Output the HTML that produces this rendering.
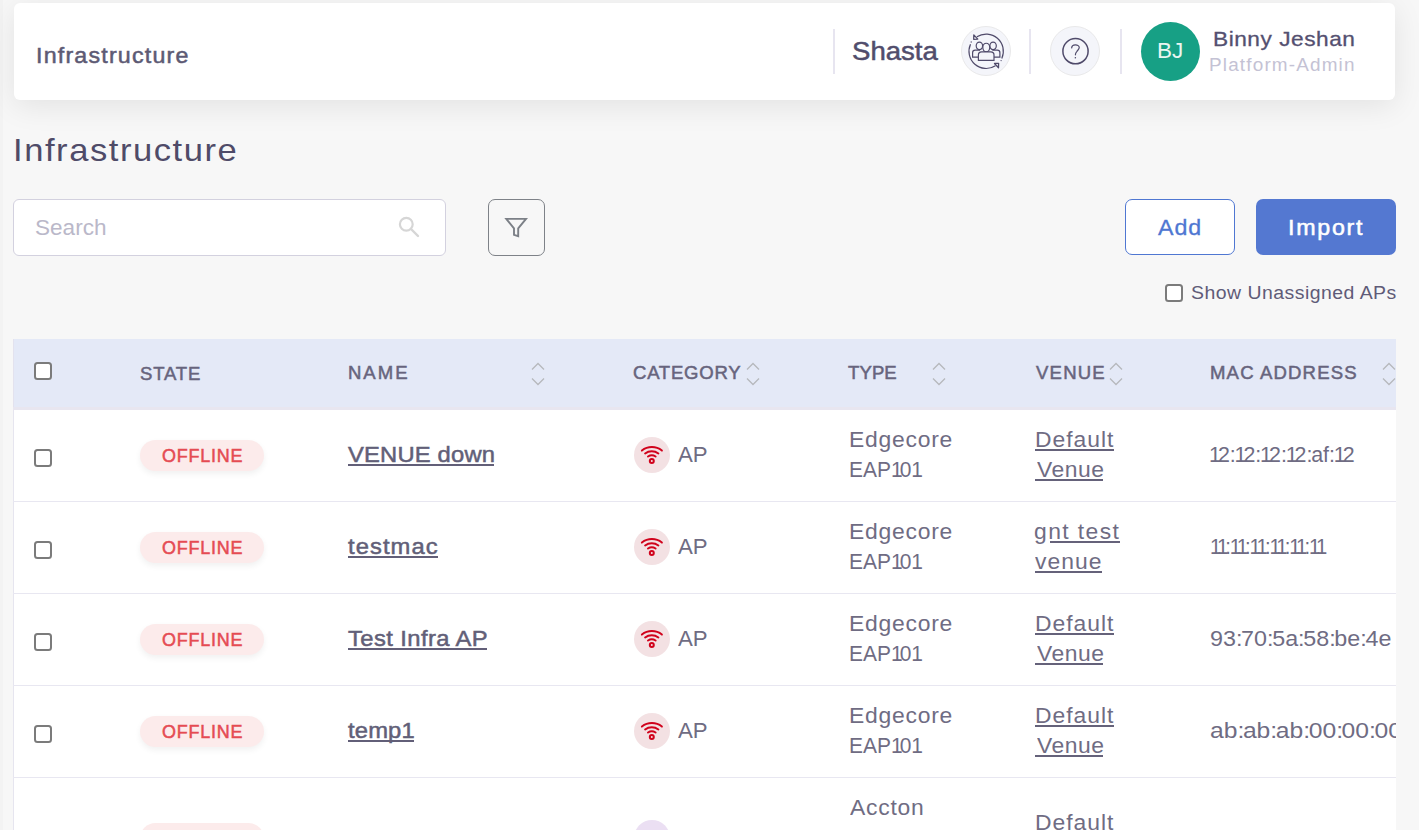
<!DOCTYPE html>
<html><head><meta charset="utf-8"><title>Infrastructure</title>
<style>
html,body{margin:0;padding:0;}
body{width:1419px;height:830px;overflow:hidden;position:relative;background:#f7f7f7;font-family:'Liberation Sans', sans-serif;}
.abs{position:absolute;box-sizing:border-box;}
 body{background:#f7f7f7}</style></head>
<body>
<div class="abs" style="left:0;top:0;width:3px;height:830px;background:#f3f3f3"></div><div class="abs" style="left:14px;top:3px;width:1381px;height:97px;background:#fff;border-radius:6px;box-shadow:0 6px 30px rgba(0,0,0,0.085)"></div><div class="abs" style="left:833px;top:29px;width:2px;height:45px;background:#e7e5f0"></div><div class="abs" style="left:1029px;top:29px;width:2px;height:45px;background:#e7e5f0"></div><div class="abs" style="left:1120px;top:29px;width:2px;height:45px;background:#e7e5f0"></div><div class="abs" style="left:961.3px;top:26.3px;width:50px;height:50px;border-radius:50%;background:#f4f5fa;border:1.5px solid #e9e9ea"></div><div class="abs" style="left:1050.1px;top:26.3px;width:50px;height:50px;border-radius:50%;background:#f4f5fa;border:1.5px solid #e9e9ea"></div><svg class="abs" style="left:961.3px;top:26.3px" width="50" height="50" viewBox="0 0 50 50" fill="none" stroke="#4f4a6a" stroke-width="1.2">
<path d="M15.86 10.83 A17.2 17.2 0 0 1 40.79 32.46"/>
<path d="M34.44 39.77 A17.2 17.2 0 0 1 9.51 18.14"/>
<path d="M12.8 8.9 L12.7 13.3 L16.8 13.14 Z" stroke-linejoin="round" stroke-width="1.3"/>
<path d="M37.5 41.7 L37.6 37.3 L33.5 37.46 Z" stroke-linejoin="round" stroke-width="1.3"/>
<circle cx="10.2" cy="16.0" r="0.65" fill="#4f4a6a" stroke="none"/>
<circle cx="40.1" cy="34.6" r="0.65" fill="#4f4a6a" stroke="none"/>
<ellipse cx="18.4" cy="19.85" rx="3.2" ry="3.75"/>
<ellipse cx="32.1" cy="19.85" rx="3.2" ry="3.75"/>
<path d="M17.4 31.1 H11.6 V26.7 Q11.6 24.1 14.2 24.1 H19"/>
<path d="M32.9 31.1 H38.9 V26.7 Q38.9 24.1 36.3 24.1 H31.4"/>
<ellipse cx="25.27" cy="21.5" rx="3.45" ry="4.25" fill="#f4f5fa"/>
<path d="M17.4 34.3 V29.0 Q17.4 25.9 20.6 25.9 H29.8 Q33.0 25.9 33.0 29.0 V34.3 Z" fill="#f4f5fa"/></svg><svg class="abs" style="left:1050.1px;top:26.3px" width="50" height="50" viewBox="0 0 50 50" fill="none" stroke="#4f4a6a" stroke-width="1.6">
<circle cx="25.5" cy="25.2" r="12.6" stroke-width="1.5"/>
<path d="M21.66 21.9 C21.8 19.9 23.4 18.85 25.4 18.85 C27.6 18.85 29.25 20.2 29.25 21.6 C29.25 23.2 27.9 24.1 26.9 25.3 C25.9 26.4 25.4 27.3 25.4 28.8" stroke-width="1.2" stroke-linecap="round"/>
<path d="M25.4 31.1 V32.4" stroke-width="1.3"/></svg><div class="abs" style="left:1141px;top:21.8px;width:59px;height:59px;border-radius:50%;background:#17a085"></div><div class="abs" style="left:13px;top:199px;width:433px;height:57px;background:#fff;border:1px solid #d3d1df;border-radius:6px"></div><svg class="abs" style="left:395px;top:212px" width="28" height="28" viewBox="0 0 28 28" fill="none" stroke="#d6d6d6" stroke-width="2.2">
<circle cx="11.3" cy="12.2" r="6.4"/><path d="M16 17 L23 24" stroke-linecap="round" stroke-width="2.4"/></svg><div class="abs" style="left:488px;top:199px;width:57px;height:57px;border:1.5px solid #7e8288;border-radius:7px"></div><svg class="abs" style="left:488px;top:199px" width="57" height="57" viewBox="0 0 57 57" fill="none" stroke="#7c8087" stroke-width="1.9" stroke-linejoin="miter">
<path d="M18.3 19.9 H38.0 L30.2 29.4 V37.2 L26.0 35.8 V29.4 Z"/></svg><div class="abs" style="left:1125px;top:199px;width:110px;height:56px;background:#fff;border:1px solid #4f77d2;border-radius:7px"></div><div class="abs" style="left:1256px;top:199px;width:140px;height:56px;background:#5478d1;border-radius:7px"></div><div class="abs" style="left:1165px;top:284px;width:18px;height:18px;background:#fff;border:2px solid #7b7b7b;border-radius:3.5px"></div><div class="abs" style="left:13px;top:339px;width:1383px;height:491px;background:#fff;border-left:1px solid #e6e5ef"></div><div class="abs" style="left:13px;top:339px;width:1383px;height:68px;background:#e4e9f7;border-left:1px solid #e3e2ee"></div><div class="abs" style="left:13px;top:407px;width:1383px;height:3px;background:#e8e6f0"></div><div class="abs" style="left:13px;top:501px;width:1383px;height:1px;background:#e8e7f1"></div><div class="abs" style="left:13px;top:593px;width:1383px;height:1px;background:#e8e7f1"></div><div class="abs" style="left:13px;top:685px;width:1383px;height:1px;background:#e8e7f1"></div><div class="abs" style="left:13px;top:777px;width:1383px;height:1px;background:#e8e7f1"></div><div class="abs" style="left:34px;top:362px;width:18px;height:18px;background:#fff;border:2px solid #7b7b7b;border-radius:3.5px"></div><div class="abs" style="left:34px;top:449px;width:18px;height:18px;background:#fff;border:2px solid #7b7b7b;border-radius:3.5px"></div><div class="abs" style="left:34px;top:541px;width:18px;height:18px;background:#fff;border:2px solid #7b7b7b;border-radius:3.5px"></div><div class="abs" style="left:34px;top:633px;width:18px;height:18px;background:#fff;border:2px solid #7b7b7b;border-radius:3.5px"></div><div class="abs" style="left:34px;top:725px;width:18px;height:18px;background:#fff;border:2px solid #7b7b7b;border-radius:3.5px"></div><svg class="abs" style="left:531.0px;top:361.5px" width="14" height="24" viewBox="0 0 14 24" fill="none" stroke="#b6b8bd" stroke-width="1.3">
<path d="M1 7.5 L7 1.5 L13 7.5"/><path d="M1 16.5 L7 22.5 L13 16.5"/></svg><svg class="abs" style="left:745.8px;top:361.5px" width="14" height="24" viewBox="0 0 14 24" fill="none" stroke="#b6b8bd" stroke-width="1.3">
<path d="M1 7.5 L7 1.5 L13 7.5"/><path d="M1 16.5 L7 22.5 L13 16.5"/></svg><svg class="abs" style="left:932.0px;top:361.5px" width="14" height="24" viewBox="0 0 14 24" fill="none" stroke="#b6b8bd" stroke-width="1.3">
<path d="M1 7.5 L7 1.5 L13 7.5"/><path d="M1 16.5 L7 22.5 L13 16.5"/></svg><svg class="abs" style="left:1108.5px;top:361.5px" width="14" height="24" viewBox="0 0 14 24" fill="none" stroke="#b6b8bd" stroke-width="1.3">
<path d="M1 7.5 L7 1.5 L13 7.5"/><path d="M1 16.5 L7 22.5 L13 16.5"/></svg><svg class="abs" style="left:1382.3px;top:361.5px" width="14" height="24" viewBox="0 0 14 24" fill="none" stroke="#b6b8bd" stroke-width="1.3">
<path d="M1 7.5 L7 1.5 L13 7.5"/><path d="M1 16.5 L7 22.5 L13 16.5"/></svg><div class="abs" style="left:140px;top:440px;width:124px;height:31px;border-radius:16px;background:#fcebeb;box-shadow:0 3px 6px rgba(0,0,0,0.06)"></div><div class="abs" style="left:348.1px;top:464.2px;width:145.8px;height:2px;background:#625f78"></div><div class="abs" style="left:1035.1px;top:449.2px;width:78.7px;height:1.8px;background:#65627a"></div><div class="abs" style="left:1035.1px;top:479.0px;width:68.3px;height:1.8px;background:#65627a"></div><div class="abs" style="left:634.2px;top:437px;width:36px;height:36px;border-radius:50%;background:#f3e1e3"></div><svg class="abs" style="left:634.2px;top:437px" width="36" height="36" viewBox="0 0 36 36" fill="none" stroke="#d0021b" stroke-width="1.95" stroke-linecap="round">
<path d="M7.9 13.6 A16 16 0 0 1 27.9 13.6"/>
<path d="M11.1 16.5 A10.95 10.95 0 0 1 24.4 16.5"/>
<path d="M14.0 19.5 A7.1 7.1 0 0 1 21.6 19.5"/>
<circle cx="17.8" cy="24.1" r="2" stroke-width="2"/></svg><div class="abs" style="left:140px;top:532px;width:124px;height:31px;border-radius:16px;background:#fcebeb;box-shadow:0 3px 6px rgba(0,0,0,0.06)"></div><div class="abs" style="left:348.1px;top:556.2px;width:89.5px;height:2px;background:#625f78"></div><div class="abs" style="left:1050.0px;top:541.2px;width:69.7px;height:1.8px;background:#65627a"></div><div class="abs" style="left:1035.1px;top:571.0px;width:66.5px;height:1.8px;background:#65627a"></div><div class="abs" style="left:634.2px;top:529px;width:36px;height:36px;border-radius:50%;background:#f3e1e3"></div><svg class="abs" style="left:634.2px;top:529px" width="36" height="36" viewBox="0 0 36 36" fill="none" stroke="#d0021b" stroke-width="1.95" stroke-linecap="round">
<path d="M7.9 13.6 A16 16 0 0 1 27.9 13.6"/>
<path d="M11.1 16.5 A10.95 10.95 0 0 1 24.4 16.5"/>
<path d="M14.0 19.5 A7.1 7.1 0 0 1 21.6 19.5"/>
<circle cx="17.8" cy="24.1" r="2" stroke-width="2"/></svg><div class="abs" style="left:140px;top:624px;width:124px;height:31px;border-radius:16px;background:#fcebeb;box-shadow:0 3px 6px rgba(0,0,0,0.06)"></div><div class="abs" style="left:348.1px;top:648.2px;width:138.6px;height:2px;background:#625f78"></div><div class="abs" style="left:1035.1px;top:633.2px;width:78.7px;height:1.8px;background:#65627a"></div><div class="abs" style="left:1035.1px;top:663.0px;width:68.3px;height:1.8px;background:#65627a"></div><div class="abs" style="left:634.2px;top:621px;width:36px;height:36px;border-radius:50%;background:#f3e1e3"></div><svg class="abs" style="left:634.2px;top:621px" width="36" height="36" viewBox="0 0 36 36" fill="none" stroke="#d0021b" stroke-width="1.95" stroke-linecap="round">
<path d="M7.9 13.6 A16 16 0 0 1 27.9 13.6"/>
<path d="M11.1 16.5 A10.95 10.95 0 0 1 24.4 16.5"/>
<path d="M14.0 19.5 A7.1 7.1 0 0 1 21.6 19.5"/>
<circle cx="17.8" cy="24.1" r="2" stroke-width="2"/></svg><div class="abs" style="left:140px;top:716px;width:124px;height:31px;border-radius:16px;background:#fcebeb;box-shadow:0 3px 6px rgba(0,0,0,0.06)"></div><div class="abs" style="left:348.1px;top:740.2px;width:66.3px;height:2px;background:#625f78"></div><div class="abs" style="left:1035.1px;top:725.2px;width:78.7px;height:1.8px;background:#65627a"></div><div class="abs" style="left:1035.1px;top:755.0px;width:68.3px;height:1.8px;background:#65627a"></div><div class="abs" style="left:634.2px;top:713px;width:36px;height:36px;border-radius:50%;background:#f3e1e3"></div><svg class="abs" style="left:634.2px;top:713px" width="36" height="36" viewBox="0 0 36 36" fill="none" stroke="#d0021b" stroke-width="1.95" stroke-linecap="round">
<path d="M7.9 13.6 A16 16 0 0 1 27.9 13.6"/>
<path d="M11.1 16.5 A10.95 10.95 0 0 1 24.4 16.5"/>
<path d="M14.0 19.5 A7.1 7.1 0 0 1 21.6 19.5"/>
<circle cx="17.8" cy="24.1" r="2" stroke-width="2"/></svg><div class="abs" style="left:140px;top:823px;width:124px;height:31px;border-radius:16px;background:#fcebeb"></div><div class="abs" style="left:634.2px;top:820.4px;width:36px;height:36px;border-radius:50%;background:#ebdff3"></div><div class="abs" style="left:1035.1px;top:832.2px;width:78.8px;height:1.8px;background:#6a677e"></div>
<div id="h_infra" style="position:absolute;left:36.20px;top:46.21px;font:400 21.5px/1 'Liberation Sans', sans-serif;letter-spacing:1.108px;color:#5d5a74;white-space:nowrap;-webkit-text-stroke:0.5px #5d5a74;transform:scaleX(1.0800);transform-origin:0 0;">Infrastructure<span class="bl" style="display:inline-block;width:0;height:0"></span></div><div id="h_shasta" style="position:absolute;left:851.80px;top:39.00px;font:400 25.5px/1 'Liberation Sans', sans-serif;letter-spacing:0.022px;color:#514d6c;white-space:nowrap;-webkit-text-stroke:0.5px #514d6c;transform:scaleX(1.0800);transform-origin:0 0;">Shasta<span class="bl" style="display:inline-block;width:0;height:0"></span></div><div id="h_bj" style="position:absolute;left:1156.70px;top:41.11px;font:400 21.5px/1 'Liberation Sans', sans-serif;letter-spacing:0.000px;color:#eaf6f1;white-space:nowrap;transform:scaleX(1.0455);transform-origin:0 0;">BJ<span class="bl" style="display:inline-block;width:0;height:0"></span></div><div id="h_name" style="position:absolute;left:1213.00px;top:27.80px;font:400 21.0px/1 'Liberation Sans', sans-serif;letter-spacing:0.485px;color:#545070;white-space:nowrap;-webkit-text-stroke:0.3px #545070;transform:scaleX(1.0800);transform-origin:0 0;">Binny Jeshan<span class="bl" style="display:inline-block;width:0;height:0"></span></div><div id="h_role" style="position:absolute;left:1208.60px;top:57.20px;font:400 17.5px/1 'Liberation Sans', sans-serif;letter-spacing:1.088px;color:#c4c2d4;white-space:nowrap;transform:scaleX(1.0800);transform-origin:0 0;">Platform-Admin<span class="bl" style="display:inline-block;width:0;height:0"></span></div><div id="p_title" style="position:absolute;left:12.50px;top:134.00px;font:400 32.0px/1 'Liberation Sans', sans-serif;letter-spacing:1.442px;color:#4f4b68;white-space:nowrap;transform:scaleX(1.0800);transform-origin:0 0;">Infrastructure<span class="bl" style="display:inline-block;width:0;height:0"></span></div><div id="p_search" style="position:absolute;left:35.10px;top:217.90px;font:400 21.5px/1 'Liberation Sans', sans-serif;letter-spacing:0.000px;color:#bab8c9;white-space:nowrap;transform:scaleX(1.0491);transform-origin:0 0;">Search<span class="bl" style="display:inline-block;width:0;height:0"></span></div><div id="p_add" style="position:absolute;left:1157.70px;top:218.00px;font:400 21.5px/1 'Liberation Sans', sans-serif;letter-spacing:0.859px;color:#4f77d2;white-space:nowrap;-webkit-text-stroke:0.3px #4f77d2;transform:scaleX(1.0800);transform-origin:0 0;">Add<span class="bl" style="display:inline-block;width:0;height:0"></span></div><div id="p_import" style="position:absolute;left:1288.10px;top:218.10px;font:400 21.5px/1 'Liberation Sans', sans-serif;letter-spacing:1.615px;color:#ffffff;white-space:nowrap;-webkit-text-stroke:0.5px #ffffff;transform:scaleX(1.0800);transform-origin:0 0;">Import<span class="bl" style="display:inline-block;width:0;height:0"></span></div><div id="p_show" style="position:absolute;left:1191.10px;top:283.71px;font:400 18.0px/1 'Liberation Sans', sans-serif;letter-spacing:0.440px;color:#5f5b78;white-space:nowrap;transform:scaleX(1.0800);transform-origin:0 0;">Show Unassigned APs<span class="bl" style="display:inline-block;width:0;height:0"></span></div><div id="th_state" style="position:absolute;left:139.50px;top:364.60px;font:400 18.2px/1 'Liberation Sans', sans-serif;letter-spacing:0.811px;color:#67647d;white-space:nowrap;-webkit-text-stroke:0.5px #67647d;transform:scaleX(1.0200);transform-origin:0 0;">STATE<span class="bl" style="display:inline-block;width:0;height:0"></span></div><div id="th_name" style="position:absolute;left:348.00px;top:364.40px;font:400 18.2px/1 'Liberation Sans', sans-serif;letter-spacing:1.930px;color:#67647d;white-space:nowrap;-webkit-text-stroke:0.5px #67647d;transform:scaleX(1.0200);transform-origin:0 0;">NAME<span class="bl" style="display:inline-block;width:0;height:0"></span></div><div id="th_cat" style="position:absolute;left:633.20px;top:364.40px;font:400 18.2px/1 'Liberation Sans', sans-serif;letter-spacing:0.726px;color:#67647d;white-space:nowrap;-webkit-text-stroke:0.5px #67647d;transform:scaleX(1.0200);transform-origin:0 0;">CATEGORY<span class="bl" style="display:inline-block;width:0;height:0"></span></div><div id="th_type" style="position:absolute;left:848.40px;top:364.40px;font:400 18.2px/1 'Liberation Sans', sans-serif;letter-spacing:0.093px;color:#67647d;white-space:nowrap;-webkit-text-stroke:0.5px #67647d;transform:scaleX(1.0200);transform-origin:0 0;">TYPE<span class="bl" style="display:inline-block;width:0;height:0"></span></div><div id="th_venue" style="position:absolute;left:1035.50px;top:364.40px;font:400 18.2px/1 'Liberation Sans', sans-serif;letter-spacing:1.167px;color:#67647d;white-space:nowrap;-webkit-text-stroke:0.5px #67647d;transform:scaleX(1.0200);transform-origin:0 0;">VENUE<span class="bl" style="display:inline-block;width:0;height:0"></span></div><div id="th_mac" style="position:absolute;left:1210.40px;top:364.40px;font:400 18.2px/1 'Liberation Sans', sans-serif;letter-spacing:1.131px;color:#67647d;white-space:nowrap;-webkit-text-stroke:0.5px #67647d;transform:scaleX(1.0200);transform-origin:0 0;">MAC ADDRESS<span class="bl" style="display:inline-block;width:0;height:0"></span></div><div id="r0_off" style="position:absolute;left:162.10px;top:447.71px;font:400 17.6px/1 'Liberation Sans', sans-serif;letter-spacing:0.760px;color:#e54b53;white-space:nowrap;-webkit-text-stroke:0.5px #e54b53;transform:scaleX(1.0200);transform-origin:0 0;">OFFLINE<span class="bl" style="display:inline-block;width:0;height:0"></span></div><div id="r0_name" style="position:absolute;left:348.30px;top:444.10px;font:400 22.0px/1 'Liberation Sans', sans-serif;letter-spacing:0.175px;color:#625f78;white-space:nowrap;-webkit-text-stroke:0.5px #625f78;transform:scaleX(1.0800);transform-origin:0 0;">VENUE down<span class="bl" style="display:inline-block;width:0;height:0"></span></div><div id="r0_ap" style="position:absolute;left:677.80px;top:443.71px;font:400 21.2px/1 'Liberation Sans', sans-serif;letter-spacing:0.000px;color:#6f6c83;white-space:nowrap;transform:scaleX(1.0484);transform-origin:0 0;">AP<span class="bl" style="display:inline-block;width:0;height:0"></span></div><div id="r0_t1" style="position:absolute;left:848.60px;top:429.00px;font:400 21.2px/1 'Liberation Sans', sans-serif;letter-spacing:0.705px;color:#6f6c83;white-space:nowrap;transform:scaleX(1.0800);transform-origin:0 0;">Edgecore<span class="bl" style="display:inline-block;width:0;height:0"></span></div><div id="r0_t2" style="position:absolute;left:848.60px;top:458.81px;font:400 21.2px/1 'Liberation Sans', sans-serif;letter-spacing:0.000px;color:#6f6c83;white-space:nowrap;transform:scaleX(0.9895);transform-origin:0 0;">EAP<i style="font-style:normal;letter-spacing:-3.0px">1</i>0<i style="font-style:normal;letter-spacing:-3.0px">1</i><span class="bl" style="display:inline-block;width:0;height:0"></span></div><div id="r0_v1" style="position:absolute;left:1034.60px;top:429.00px;font:400 21.2px/1 'Liberation Sans', sans-serif;letter-spacing:0.911px;color:#6f6c83;white-space:nowrap;transform:scaleX(1.0800);transform-origin:0 0;">Default<span class="bl" style="display:inline-block;width:0;height:0"></span></div><div id="r0_v2" style="position:absolute;left:1036.60px;top:458.81px;font:400 21.2px/1 'Liberation Sans', sans-serif;letter-spacing:0.485px;color:#6f6c83;white-space:nowrap;transform:scaleX(1.0800);transform-origin:0 0;">Venue<span class="bl" style="display:inline-block;width:0;height:0"></span></div><div id="r0_mac" style="position:absolute;left:1209.40px;top:444.00px;font:400 21.2px/1 'Liberation Sans', sans-serif;letter-spacing:0.000px;color:#6f6c83;white-space:nowrap;transform:scaleX(1.0107);transform-origin:0 0;"><i style="font-style:normal;letter-spacing:-3.0px">1</i>2<i style="font-style:normal;letter-spacing:-1.2px">:</i><i style="font-style:normal;letter-spacing:-3.0px">1</i>2<i style="font-style:normal;letter-spacing:-1.2px">:</i><i style="font-style:normal;letter-spacing:-3.0px">1</i>2<i style="font-style:normal;letter-spacing:-1.2px">:</i><i style="font-style:normal;letter-spacing:-3.0px">1</i>2<i style="font-style:normal;letter-spacing:-1.2px">:</i>af<i style="font-style:normal;letter-spacing:-1.2px">:</i><i style="font-style:normal;letter-spacing:-3.0px">1</i>2<span class="bl" style="display:inline-block;width:0;height:0"></span></div><div id="r1_off" style="position:absolute;left:162.10px;top:539.71px;font:400 17.6px/1 'Liberation Sans', sans-serif;letter-spacing:0.760px;color:#e54b53;white-space:nowrap;-webkit-text-stroke:0.5px #e54b53;transform:scaleX(1.0200);transform-origin:0 0;">OFFLINE<span class="bl" style="display:inline-block;width:0;height:0"></span></div><div id="r1_name" style="position:absolute;left:348.30px;top:536.10px;font:400 22.0px/1 'Liberation Sans', sans-serif;letter-spacing:1.000px;color:#625f78;white-space:nowrap;-webkit-text-stroke:0.5px #625f78;transform:scaleX(1.0800);transform-origin:0 0;">testmac<span class="bl" style="display:inline-block;width:0;height:0"></span></div><div id="r1_ap" style="position:absolute;left:677.80px;top:535.71px;font:400 21.2px/1 'Liberation Sans', sans-serif;letter-spacing:0.000px;color:#6f6c83;white-space:nowrap;transform:scaleX(1.0484);transform-origin:0 0;">AP<span class="bl" style="display:inline-block;width:0;height:0"></span></div><div id="r1_t1" style="position:absolute;left:848.60px;top:521.00px;font:400 21.2px/1 'Liberation Sans', sans-serif;letter-spacing:0.705px;color:#6f6c83;white-space:nowrap;transform:scaleX(1.0800);transform-origin:0 0;">Edgecore<span class="bl" style="display:inline-block;width:0;height:0"></span></div><div id="r1_t2" style="position:absolute;left:848.60px;top:550.81px;font:400 21.2px/1 'Liberation Sans', sans-serif;letter-spacing:0.000px;color:#6f6c83;white-space:nowrap;transform:scaleX(0.9895);transform-origin:0 0;">EAP<i style="font-style:normal;letter-spacing:-3.0px">1</i>0<i style="font-style:normal;letter-spacing:-3.0px">1</i><span class="bl" style="display:inline-block;width:0;height:0"></span></div><div id="r1_v1" style="position:absolute;left:1034.00px;top:521.00px;font:400 21.2px/1 'Liberation Sans', sans-serif;letter-spacing:1.308px;color:#6f6c83;white-space:nowrap;transform:scaleX(1.0800);transform-origin:0 0;">gnt test<span class="bl" style="display:inline-block;width:0;height:0"></span></div><div id="r1_v2" style="position:absolute;left:1035.00px;top:550.81px;font:400 21.2px/1 'Liberation Sans', sans-serif;letter-spacing:0.943px;color:#6f6c83;white-space:nowrap;transform:scaleX(1.0800);transform-origin:0 0;">venue<span class="bl" style="display:inline-block;width:0;height:0"></span></div><div id="r1_mac" style="position:absolute;left:1210.40px;top:536.00px;font:400 21.2px/1 'Liberation Sans', sans-serif;letter-spacing:0.000px;color:#6f6c83;white-space:nowrap;transform:scaleX(0.9562);transform-origin:0 0;"><i style="font-style:normal;letter-spacing:-3.0px">1</i><i style="font-style:normal;letter-spacing:-3.0px">1</i><i style="font-style:normal;letter-spacing:-1.2px">:</i><i style="font-style:normal;letter-spacing:-3.0px">1</i><i style="font-style:normal;letter-spacing:-3.0px">1</i><i style="font-style:normal;letter-spacing:-1.2px">:</i><i style="font-style:normal;letter-spacing:-3.0px">1</i><i style="font-style:normal;letter-spacing:-3.0px">1</i><i style="font-style:normal;letter-spacing:-1.2px">:</i><i style="font-style:normal;letter-spacing:-3.0px">1</i><i style="font-style:normal;letter-spacing:-3.0px">1</i><i style="font-style:normal;letter-spacing:-1.2px">:</i><i style="font-style:normal;letter-spacing:-3.0px">1</i><i style="font-style:normal;letter-spacing:-3.0px">1</i><i style="font-style:normal;letter-spacing:-1.2px">:</i><i style="font-style:normal;letter-spacing:-3.0px">1</i><i style="font-style:normal;letter-spacing:-3.0px">1</i><span class="bl" style="display:inline-block;width:0;height:0"></span></div><div id="r2_off" style="position:absolute;left:162.10px;top:631.71px;font:400 17.6px/1 'Liberation Sans', sans-serif;letter-spacing:0.760px;color:#e54b53;white-space:nowrap;-webkit-text-stroke:0.5px #e54b53;transform:scaleX(1.0200);transform-origin:0 0;">OFFLINE<span class="bl" style="display:inline-block;width:0;height:0"></span></div><div id="r2_name" style="position:absolute;left:348.30px;top:628.10px;font:400 22.0px/1 'Liberation Sans', sans-serif;letter-spacing:0.382px;color:#625f78;white-space:nowrap;-webkit-text-stroke:0.5px #625f78;transform:scaleX(1.0800);transform-origin:0 0;">Test Infra AP<span class="bl" style="display:inline-block;width:0;height:0"></span></div><div id="r2_ap" style="position:absolute;left:677.80px;top:627.71px;font:400 21.2px/1 'Liberation Sans', sans-serif;letter-spacing:0.000px;color:#6f6c83;white-space:nowrap;transform:scaleX(1.0484);transform-origin:0 0;">AP<span class="bl" style="display:inline-block;width:0;height:0"></span></div><div id="r2_t1" style="position:absolute;left:848.60px;top:613.00px;font:400 21.2px/1 'Liberation Sans', sans-serif;letter-spacing:0.705px;color:#6f6c83;white-space:nowrap;transform:scaleX(1.0800);transform-origin:0 0;">Edgecore<span class="bl" style="display:inline-block;width:0;height:0"></span></div><div id="r2_t2" style="position:absolute;left:848.60px;top:642.81px;font:400 21.2px/1 'Liberation Sans', sans-serif;letter-spacing:0.000px;color:#6f6c83;white-space:nowrap;transform:scaleX(0.9895);transform-origin:0 0;">EAP<i style="font-style:normal;letter-spacing:-3.0px">1</i>0<i style="font-style:normal;letter-spacing:-3.0px">1</i><span class="bl" style="display:inline-block;width:0;height:0"></span></div><div id="r2_v1" style="position:absolute;left:1034.60px;top:613.00px;font:400 21.2px/1 'Liberation Sans', sans-serif;letter-spacing:0.911px;color:#6f6c83;white-space:nowrap;transform:scaleX(1.0800);transform-origin:0 0;">Default<span class="bl" style="display:inline-block;width:0;height:0"></span></div><div id="r2_v2" style="position:absolute;left:1036.60px;top:642.81px;font:400 21.2px/1 'Liberation Sans', sans-serif;letter-spacing:0.485px;color:#6f6c83;white-space:nowrap;transform:scaleX(1.0800);transform-origin:0 0;">Venue<span class="bl" style="display:inline-block;width:0;height:0"></span></div><div id="r2_mac" style="position:absolute;left:1210.40px;top:628.00px;font:400 21.2px/1 'Liberation Sans', sans-serif;letter-spacing:0.000px;color:#6f6c83;white-space:nowrap;transform:scaleX(1.1000);transform-origin:0 0;">93<i style="font-style:normal;letter-spacing:-1.2px">:</i>70<i style="font-style:normal;letter-spacing:-1.2px">:</i>5a<i style="font-style:normal;letter-spacing:-1.2px">:</i>58<i style="font-style:normal;letter-spacing:-1.2px">:</i>be<i style="font-style:normal;letter-spacing:-1.2px">:</i>4e<span class="bl" style="display:inline-block;width:0;height:0"></span></div><div id="r3_off" style="position:absolute;left:162.10px;top:723.71px;font:400 17.6px/1 'Liberation Sans', sans-serif;letter-spacing:0.760px;color:#e54b53;white-space:nowrap;-webkit-text-stroke:0.5px #e54b53;transform:scaleX(1.0200);transform-origin:0 0;">OFFLINE<span class="bl" style="display:inline-block;width:0;height:0"></span></div><div id="r3_name" style="position:absolute;left:348.30px;top:720.10px;font:400 22.0px/1 'Liberation Sans', sans-serif;letter-spacing:0.145px;color:#625f78;white-space:nowrap;-webkit-text-stroke:0.5px #625f78;transform:scaleX(1.0800);transform-origin:0 0;">temp1<span class="bl" style="display:inline-block;width:0;height:0"></span></div><div id="r3_ap" style="position:absolute;left:677.80px;top:719.71px;font:400 21.2px/1 'Liberation Sans', sans-serif;letter-spacing:0.000px;color:#6f6c83;white-space:nowrap;transform:scaleX(1.0484);transform-origin:0 0;">AP<span class="bl" style="display:inline-block;width:0;height:0"></span></div><div id="r3_t1" style="position:absolute;left:848.60px;top:705.00px;font:400 21.2px/1 'Liberation Sans', sans-serif;letter-spacing:0.705px;color:#6f6c83;white-space:nowrap;transform:scaleX(1.0800);transform-origin:0 0;">Edgecore<span class="bl" style="display:inline-block;width:0;height:0"></span></div><div id="r3_t2" style="position:absolute;left:848.60px;top:734.81px;font:400 21.2px/1 'Liberation Sans', sans-serif;letter-spacing:0.000px;color:#6f6c83;white-space:nowrap;transform:scaleX(0.9895);transform-origin:0 0;">EAP<i style="font-style:normal;letter-spacing:-3.0px">1</i>0<i style="font-style:normal;letter-spacing:-3.0px">1</i><span class="bl" style="display:inline-block;width:0;height:0"></span></div><div id="r3_v1" style="position:absolute;left:1034.60px;top:705.00px;font:400 21.2px/1 'Liberation Sans', sans-serif;letter-spacing:0.911px;color:#6f6c83;white-space:nowrap;transform:scaleX(1.0800);transform-origin:0 0;">Default<span class="bl" style="display:inline-block;width:0;height:0"></span></div><div id="r3_v2" style="position:absolute;left:1036.60px;top:734.81px;font:400 21.2px/1 'Liberation Sans', sans-serif;letter-spacing:0.485px;color:#6f6c83;white-space:nowrap;transform:scaleX(1.0800);transform-origin:0 0;">Venue<span class="bl" style="display:inline-block;width:0;height:0"></span></div><div id="r3_mac" style="position:absolute;left:1210.40px;top:720.00px;font:400 21.2px/1 'Liberation Sans', sans-serif;letter-spacing:0.000px;color:#6f6c83;white-space:nowrap;transform:scaleX(1.1638);transform-origin:0 0;">ab<i style="font-style:normal;letter-spacing:-1.2px">:</i>ab<i style="font-style:normal;letter-spacing:-1.2px">:</i>ab<i style="font-style:normal;letter-spacing:-1.2px">:</i>00<i style="font-style:normal;letter-spacing:-1.2px">:</i>00<i style="font-style:normal;letter-spacing:-1.2px">:</i>00<span class="bl" style="display:inline-block;width:0;height:0"></span></div><div id="r4_t1" style="position:absolute;left:849.80px;top:797.00px;font:400 21.2px/1 'Liberation Sans', sans-serif;letter-spacing:0.692px;color:#6f6c83;white-space:nowrap;transform:scaleX(1.0800);transform-origin:0 0;">Accton<span class="bl" style="display:inline-block;width:0;height:0"></span></div><div id="r4_v1" style="position:absolute;left:1034.60px;top:812.00px;font:400 21.2px/1 'Liberation Sans', sans-serif;letter-spacing:0.911px;color:#6f6c83;white-space:nowrap;transform:scaleX(1.0800);transform-origin:0 0;">Default<span class="bl" style="display:inline-block;width:0;height:0"></span></div>
<div class="abs" style="left:1396px;top:330px;width:23px;height:500px;background:#f7f7f7"></div>
</body></html>
